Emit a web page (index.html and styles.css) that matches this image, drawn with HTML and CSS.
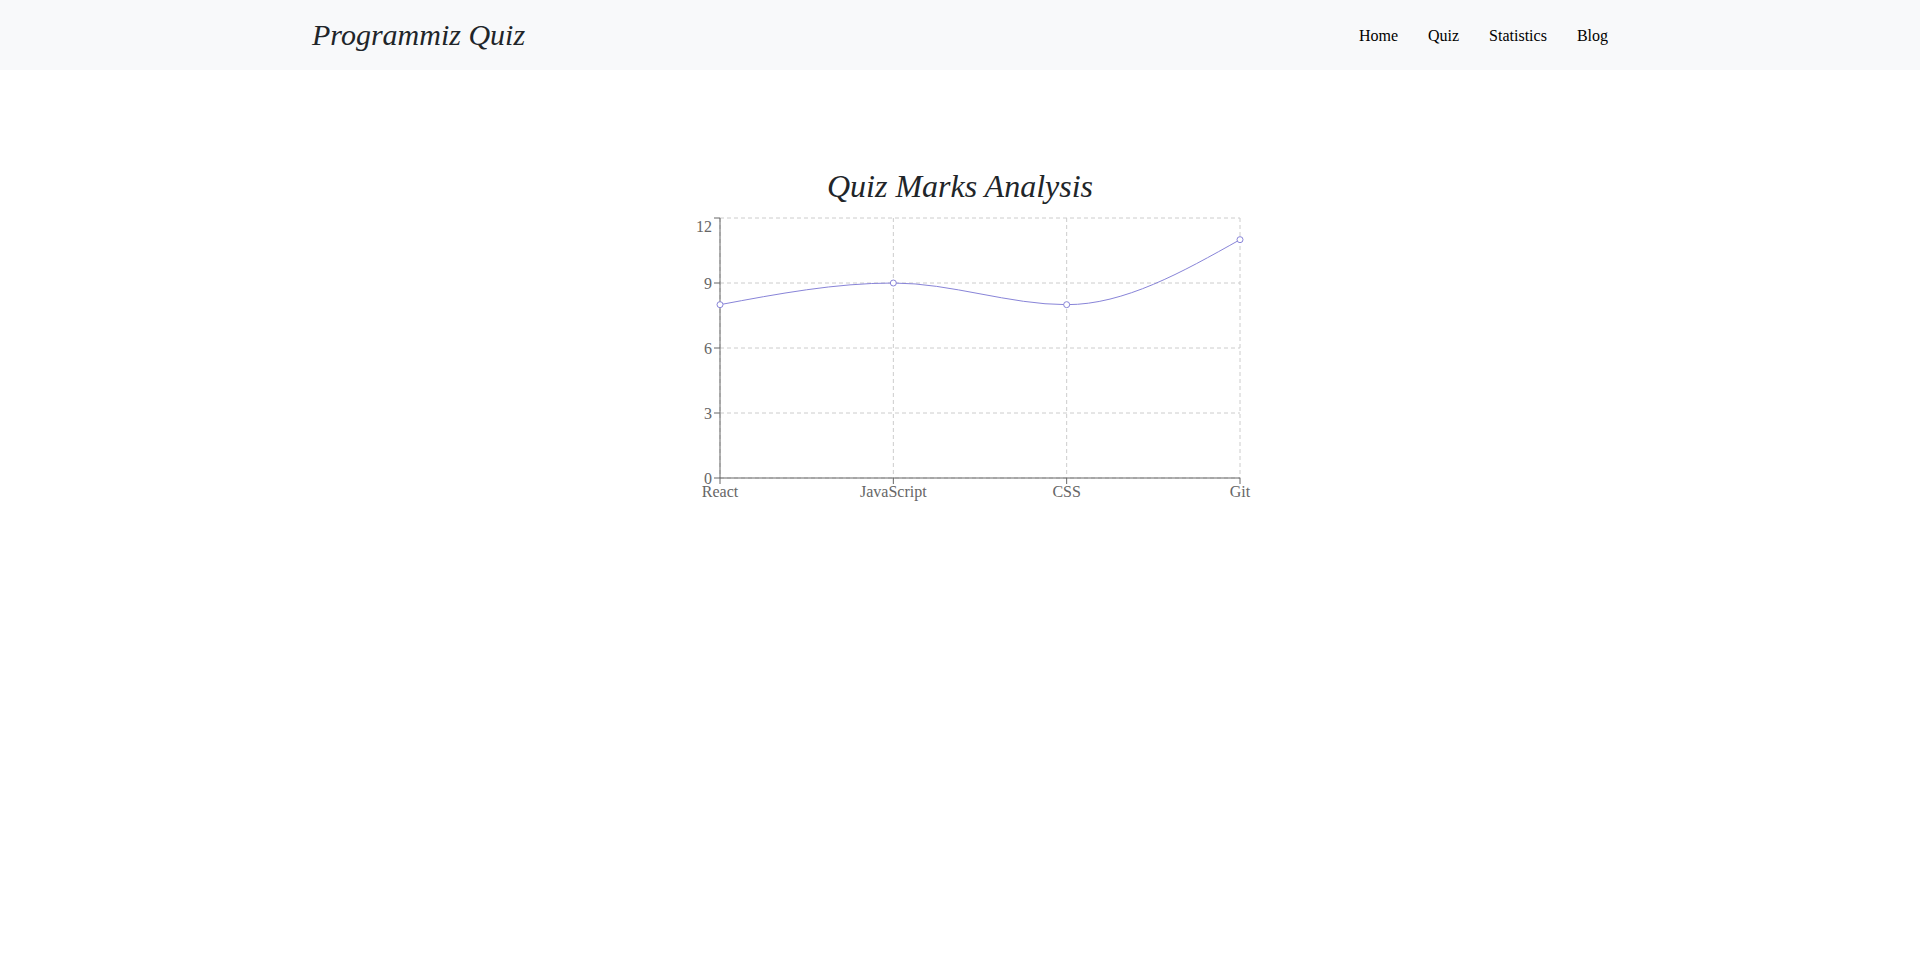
FILE: index.html
```html
<!DOCTYPE html>
<html lang="en">
<head>
<meta charset="utf-8">
<title>Programmiz Quiz</title>
<link rel="stylesheet" href="styles.css">
</head>
<body>
<header class="navbar">
  <div class="container">
    <a class="brand" href="#">Programmiz Quiz</a>
    <nav class="nav">
      <a class="nav-link" href="#">Home</a>
      <a class="nav-link" href="#">Quiz</a>
      <a class="nav-link" href="#">Statistics</a>
      <a class="nav-link" href="#">Blog</a>
    </nav>
  </div>
</header>
<main class="main">
  <h1 class="chart-title">Quiz Marks Analysis</h1>
  <svg class="chart" width="600" height="300" viewBox="0 0 600 300">
    <g class="grid">
      <line x1="60" y1="5" x2="580" y2="5"/>
      <line x1="60" y1="70" x2="580" y2="70"/>
      <line x1="60" y1="135" x2="580" y2="135"/>
      <line x1="60" y1="200" x2="580" y2="200"/>
      <line x1="60" y1="265" x2="580" y2="265"/>
      <line x1="60" y1="5" x2="60" y2="265"/>
      <line x1="233.333" y1="5" x2="233.333" y2="265"/>
      <line x1="406.667" y1="5" x2="406.667" y2="265"/>
      <line x1="580" y1="5" x2="580" y2="265"/>
    </g>
    <g class="axis">
      <line x1="60" y1="265" x2="580" y2="265"/>
      <line x1="60" y1="265" x2="60" y2="271"/>
      <line x1="233.333" y1="265" x2="233.333" y2="271"/>
      <line x1="406.667" y1="265" x2="406.667" y2="271"/>
      <line x1="580" y1="265" x2="580" y2="271"/>
      <line x1="60" y1="5" x2="60" y2="265"/>
      <line x1="54" y1="5" x2="60" y2="5"/>
      <line x1="54" y1="70" x2="60" y2="70"/>
      <line x1="54" y1="135" x2="60" y2="135"/>
      <line x1="54" y1="200" x2="60" y2="200"/>
      <line x1="54" y1="265" x2="60" y2="265"/>
    </g>
    <g class="ticks-x">
      <text x="60" y="273" dy="0.71em">React</text>
      <text x="233.333" y="273" dy="0.71em">JavaScript</text>
      <text x="406.667" y="273" dy="0.71em">CSS</text>
      <text x="580" y="273" dy="0.71em">Git</text>
    </g>
    <g class="ticks-y">
      <text x="52" y="265" dy="0.355em">0</text>
      <text x="52" y="200" dy="0.355em">3</text>
      <text x="52" y="135" dy="0.355em">6</text>
      <text x="52" y="70" dy="0.355em">9</text>
      <text x="52" y="13" dy="0.355em">12</text>
    </g>
    <path class="line" d="M60,91.667C117.778,80.833,175.556,70,233.333,70C291.111,70,348.889,91.667,406.667,91.667C464.444,91.667,522.222,59.167,580,26.667"/>
    <g class="dots">
      <circle cx="60" cy="91.667" r="3"/>
      <circle cx="233.333" cy="70" r="3"/>
      <circle cx="406.667" cy="91.667" r="3"/>
      <circle cx="580" cy="26.667" r="3"/>
    </g>
  </svg>
</main>
</body>
</html>
```
FILE: styles.css
```css
html, body {
  margin: 0;
  padding: 0;
  background: #ffffff;
  font-family: "Liberation Serif", "Times New Roman", serif;
  font-size: 16px;
  color: #212529;
}

.navbar {
  background: #f8f9fa;
  height: 70px;
}

.container {
  width: 1320px;
  box-sizing: border-box;
  margin: 0 auto;
  padding: 0 12px;
  height: 100%;
  display: flex;
  align-items: center;
  justify-content: space-between;
}

.brand {
  font-style: italic;
  font-size: 30px;
  line-height: 36px;
  color: #212529;
  text-decoration: none;
}

.nav {
  display: flex;
  gap: 30px;
  padding-top: 2px;
}

.nav-link {
  color: #000000;
  text-decoration: none;
  font-size: 16px;
  line-height: 18px;
}

.main {
  padding-top: 98px;
  display: flex;
  flex-direction: column;
  align-items: center;
}

.chart-title {
  margin: 0 0 9px 0;
  font-style: italic;
  font-weight: normal;
  font-size: 32px;
  line-height: 36px;
  color: #212529;
}

.chart {
  display: block;
  font-family: "Liberation Serif", "Times New Roman", serif;
  font-size: 16px;
}

.grid line {
  stroke: #cccccc;
  stroke-dasharray: 4 3;
  fill: none;
}

.axis line {
  stroke: #666666;
  fill: none;
}

.ticks-x text {
  fill: #666666;
  text-anchor: middle;
}

.ticks-y text {
  fill: #666666;
  text-anchor: end;
}

.line {
  fill: none;
  stroke: #8884d8;
  stroke-width: 1;
}

.dots circle {
  fill: #ffffff;
  stroke: #8884d8;
  stroke-width: 1;
}
```
